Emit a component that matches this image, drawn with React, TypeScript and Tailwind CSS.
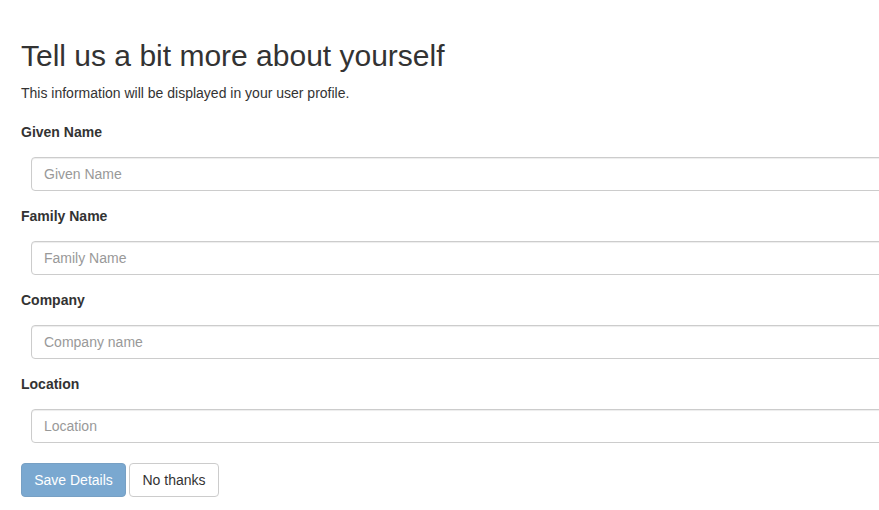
export default function App() {
  const fields = [
    { label: "Given Name", ph: "Given Name" },
    { label: "Family Name", ph: "Family Name" },
    { label: "Company", ph: "Company name" },
    { label: "Location", ph: "Location" },
  ];
  return (
    <div className="w-[879px] h-[510px] overflow-hidden bg-white text-[#333] font-['Liberation_Sans',Arial,sans-serif]">
      <div className="pl-[21px] pt-[39px]">
        <h1 className="text-[30px] leading-[33px] font-normal">Tell us a bit more about yourself</h1>
        <p className="text-[14px] leading-[20px] mt-[11px]">This information will be displayed in your user profile.</p>
        <div className="mt-[19px]">
          {fields.map((f) => (
            <div key={f.label} className="mb-[15px]">
              <label className="block text-[14px] leading-[20px] font-bold">{f.label}</label>
              <div className="pl-[10px] mt-[15px]">
                <input
                  type="text"
                  placeholder={f.ph}
                  className="block w-[900px] h-[34px] px-[12px] text-[14px] border border-[#ccc] rounded-[4px] shadow-[inset_0_1px_1px_rgba(0,0,0,0.075)] placeholder:text-[#999] outline-none"
                />
              </div>
            </div>
          ))}
        </div>
        <div className="flex gap-[3px] mt-[20px]">
          <button className="h-[34px] w-[105px] text-[14px] text-white bg-[#7aa8d0] border border-[#77a0c4] rounded-[4px]">Save Details</button>
          <button className="h-[34px] w-[90px] text-[14px] text-[#333] bg-white border border-[#ccc] rounded-[4px]">No thanks</button>
        </div>
      </div>
    </div>
  );
}
